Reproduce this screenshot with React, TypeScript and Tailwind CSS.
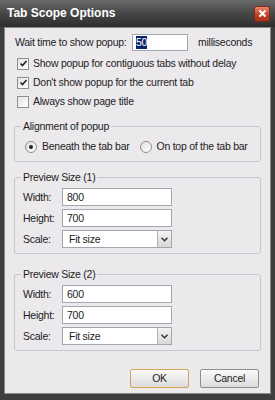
import React from "react";

const font = { fontFamily: '"Liberation Sans", Arial, sans-serif' };

function Checkbox({ checked }: { checked: boolean }) {
  return (
    <div className="w-[12px] h-[12px] border border-[#8f8f8f] bg-gradient-to-br from-[#e4e4e4] to-white flex items-center justify-center">
      {checked && (
        <svg width="9" height="9" viewBox="0 0 9 9">
          <path d="M1.5 4.5 L3.5 6.5 L7.5 2" stroke="#222" strokeWidth="1.6" fill="none" />
        </svg>
      )}
    </div>
  );
}

function Radio({ checked }: { checked: boolean }) {
  return (
    <div className="w-[12px] h-[12px] rounded-full border border-[#8f8f8f] bg-gradient-to-br from-[#e0e0e0] to-white flex items-center justify-center">
      {checked && <div className="w-[4px] h-[4px] rounded-full bg-[#222]" />}
    </div>
  );
}

function TextInput({ value }: { value: string }) {
  return (
    <div className="w-[110px] h-[18px] border border-[#a3a6ad] bg-white flex items-center px-[4px] text-[#222]">
      {value}
    </div>
  );
}

function Select() {
  return (
    <div className="w-[110px] h-[18px] border border-[#a3a6ad] bg-white flex items-center justify-between pl-[6px] text-[#222]">
      <span>Fit size</span>
      <div className="w-[14px] h-[16px] border-l border-[#b0b0b0] bg-gradient-to-b from-[#f4f4f4] to-[#d8d8d8] flex items-center justify-center">
        <svg width="7" height="5" viewBox="0 0 7 5">
          <path d="M0.5 0.8 L3.5 3.8 L6.5 0.8" stroke="#333" strokeWidth="1.5" fill="none" />
        </svg>
      </div>
    </div>
  );
}

function Group({ title, children }: { title: string; children: React.ReactNode }) {
  return (
    <div className="relative mx-[9px] border border-[#c9c5cd] rounded-[3px]">
      <div className="absolute -top-[8px] left-[6px] px-[2px] bg-[#ece9ed] text-[#222] leading-[14px]">
        {title}
      </div>
      {children}
    </div>
  );
}

function SizeGroup({ n, w }: { n: number; w: string }) {
  return (
    <Group title={`Preview Size (${n})`}>
      <div className="flex flex-col gap-[3px] pt-[10px] pb-[5px] pl-[8px] text-[#222]">
        <div className="flex items-center">
          <span className="w-[39px]">Width:</span>
          <TextInput value={w} />
        </div>
        <div className="flex items-center">
          <span className="w-[39px]">Height:</span>
          <TextInput value="700" />
        </div>
        <div className="flex items-center">
          <span className="w-[39px]">Scale:</span>
          <Select />
        </div>
      </div>
    </Group>
  );
}

function Button({ label, def }: { label: string; def?: boolean }) {
  return (
    <div
      className={`w-[59px] h-[19px] rounded-[2px] flex items-center justify-center text-[#222] bg-gradient-to-b from-[#fafafa] to-[#dcdcdc] border ${
        def ? "border-[#d8a255]" : "border-[#8e8f8f]"
      }`}
    >
      {label}
    </div>
  );
}

export default function App() {
  return (
    <div
      className="w-[275px] h-[400px] overflow-hidden bg-[#3e3e3e] flex flex-col text-[10.5px] tracking-[-0.25px] whitespace-nowrap leading-[13px]"
      style={font}
    >
      <div className="h-[27px] shrink-0 flex items-center justify-between pl-[7px] pr-[5px] bg-gradient-to-b from-[#6a6a6a] via-[#474747] to-[#2e2e2e]">
        <span className="text-white text-[12px] font-bold tracking-normal">Tab Scope Options</span>
        <div className="w-[16px] h-[16px] rounded-[2px] border border-[#7a2a1a] bg-gradient-to-b from-[#e8876a] via-[#c9452a] to-[#a8301c] flex items-center justify-center">
          <svg width="9" height="9" viewBox="0 0 9 9">
            <path d="M1.5 1.5 L7.5 7.5 M7.5 1.5 L1.5 7.5" stroke="white" strokeWidth="2" />
          </svg>
        </div>
      </div>
      <div className="flex-1 mx-[4px] mb-[6px] bg-[#ece9ed] border border-[#8a8a8a] flex flex-col">
        <div className="flex items-center pt-[6px] pl-[10px] text-[#222]">
          <span className="w-[117px]">Wait time to show popup:</span>
          <div className="w-[56px] h-[17px] border border-[#a3a6ad] bg-white flex items-center px-[3px]">
            <span className="bg-[#0a246a] text-white leading-[13px]">50</span>
          </div>
          <span className="ml-[10px]">milliseconds</span>
        </div>
        <div className="flex flex-col gap-[6px] pt-[6px] pl-[12px] text-[#222]">
          <div className="flex items-center gap-[4px]">
            <Checkbox checked />
            <span>Show popup for contiguous tabs without delay</span>
          </div>
          <div className="flex items-center gap-[4px]">
            <Checkbox checked />
            <span>Don't show popup for the current tab</span>
          </div>
          <div className="flex items-center gap-[4px]">
            <Checkbox checked={false} />
            <span>Always show page title</span>
          </div>
        </div>
        <div className="mt-[18px]">
          <Group title="Alignment of popup">
            <div className="flex items-center pt-[13px] pb-[8px] pl-[10px] text-[#222]">
              <div className="flex items-center gap-[5px]">
                <Radio checked />
                <span>Beneath the tab bar</span>
              </div>
              <div className="flex items-center gap-[5px] ml-[10px]">
                <Radio checked={false} />
                <span>On top of the tab bar</span>
              </div>
            </div>
          </Group>
        </div>
        <div className="mt-[15px]">
          <SizeGroup n={1} w="800" />
        </div>
        <div className="mt-[20px]">
          <SizeGroup n={2} w="600" />
        </div>
        <div className="flex justify-end gap-[11px] pr-[11px] mt-[18px]">
          <Button label="OK" def />
          <Button label="Cancel" />
        </div>
      </div>
    </div>
  );
}
